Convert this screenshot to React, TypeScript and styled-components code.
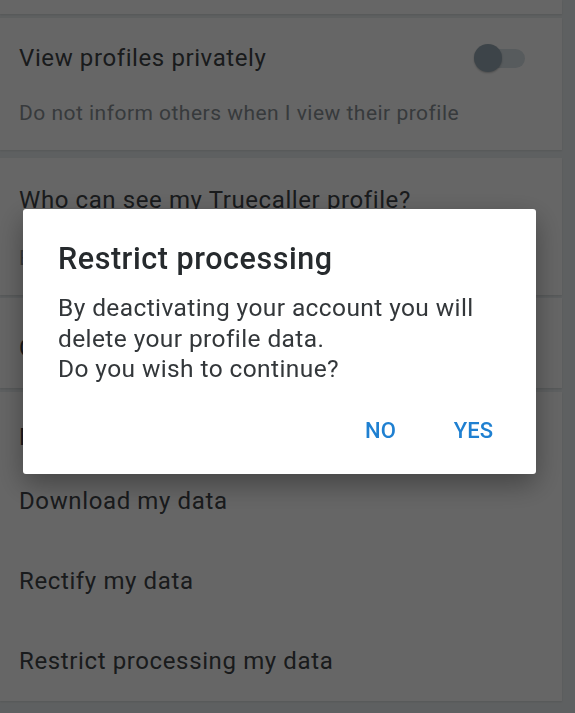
import React from 'react'
import styled, { createGlobalStyle } from 'styled-components'

const FONT = `Roboto, 'Noto Sans', 'Liberation Sans', sans-serif`

const GlobalStyle = createGlobalStyle`
  html, body {
    margin: 0;
    padding: 0;
    background: #ebf0f2;
  }
  body {
    font-family: ${FONT};
    -webkit-font-smoothing: antialiased;
  }
`

const Page = styled.div`
  width: 575px;
  height: 713px;
  overflow: hidden;
  padding-right: 13px;
  box-sizing: border-box;
`

const Card = styled.section<{ $height?: number; $gap?: number }>`
  background: #ffffff;
  box-shadow: 0 1px 2px rgba(0, 0, 0, 0.1);
  margin-bottom: ${(p) => p.$gap ?? 4}px;
  padding-left: 19px;
  box-sizing: border-box;
  ${(p) => (p.$height ? `height: ${p.$height}px;` : '')}
`

const Block = styled.div<{ $top: number; $bottom: number }>`
  padding-top: ${(p) => p.$top}px;
  padding-bottom: ${(p) => p.$bottom}px;
`

const TitleRow = styled.div`
  display: flex;
  align-items: center;
  justify-content: space-between;
  padding-right: 37px;
`

const Title = styled.div`
  font-size: 24px;
  letter-spacing: 0.6px;
  line-height: 28px;
  color: #3f4448;
  white-space: nowrap;
`

const Subtitle = styled.div<{ $gap: number }>`
  margin-top: ${(p) => p.$gap}px;
  font-size: 21px;
  letter-spacing: 0.48px;
  line-height: 26px;
  color: #8a9297;
  white-space: nowrap;
`

const ItemList = styled.div`
  margin-top: 10px;
`

const Item = styled.div`
  height: 80px;
  display: flex;
  align-items: center;
  font-size: 24px;
  letter-spacing: 0.62px;
  color: #3f4448;
  white-space: nowrap;
`

const Switch = styled.div`
  position: relative;
  width: 51px;
  height: 28px;
  flex-shrink: 0;
`

const Track = styled.div`
  position: absolute;
  left: 6px;
  right: 0;
  top: 4.5px;
  height: 19px;
  border-radius: 10px;
  background: #d9e3e8;
`

const Thumb = styled.div`
  position: absolute;
  left: 0;
  top: 0;
  width: 28px;
  height: 28px;
  border-radius: 50%;
  background: #98aab6;
  box-shadow: 0 1px 2px rgba(0, 0, 0, 0.25);
`

const Scrim = styled.div`
  position: fixed;
  inset: 0;
  background: rgba(0, 0, 0, 0.6);
  display: flex;
  align-items: flex-start;
  padding: 209px 0 0 23px;
  box-sizing: border-box;
`

const Dialog = styled.div`
  width: 513px;
  height: 265px;
  background: #ffffff;
  border-radius: 3px;
  box-shadow: 0 10px 28px rgba(0, 0, 0, 0.35);
  padding: 33px 43px 0 35px;
  box-sizing: border-box;
  display: flex;
  flex-direction: column;
`

const DialogTitle = styled.h2`
  margin: 0;
  font-size: 30.5px;
  letter-spacing: 0.55px;
  line-height: 34px;
  font-weight: 500;
  color: #262a2d;
  white-space: nowrap;
`

const DialogBody = styled.p`
  margin: 17px 0 0;
  font-size: 24.5px;
  letter-spacing: 0.4px;
  line-height: 30.5px;
  color: #33373a;
  white-space: nowrap;
`

const Actions = styled.div`
  margin-top: auto;
  margin-bottom: 31px;
  display: flex;
  justify-content: flex-end;
  gap: 58px;
`

const ActionButton = styled.button`
  border: none;
  background: none;
  padding: 0;
  font-family: ${FONT};
  font-size: 22px;
  line-height: 24px;
  font-weight: 500;
  color: #1f80d1;
  cursor: pointer;
`

const dataItems = ['Download my data', 'Rectify my data', 'Restrict processing my data']

export default function App() {
  return (
    <>
      <GlobalStyle />
      <Page>
        <Card $height={14} />
        <Card $gap={8}>
          <Block $top={26} $bottom={24}>
            <TitleRow>
              <Title>View profiles privately</Title>
              <Switch>
                <Track />
                <Thumb />
              </Switch>
            </TitleRow>
            <Subtitle $gap={28}>Do not inform others when I view their profile</Subtitle>
          </Block>
        </Card>
        <Card $gap={3}>
          <Block $top={28} $bottom={24}>
            <Title>Who can see my Truecaller profile?</Title>
            <Subtitle $gap={31}>Everyone</Subtitle>
          </Block>
        </Card>
        <Card>
          <Block $top={36} $bottom={26}>
            <Title>Customize ads</Title>
          </Block>
        </Card>
        <Card>
          <Block $top={31} $bottom={0}>
            <Title>Manage my data</Title>
            <ItemList>
              {dataItems.map((item) => (
                <Item key={item}>{item}</Item>
              ))}
            </ItemList>
          </Block>
        </Card>
      </Page>
      <Scrim>
        <Dialog role="dialog">
          <DialogTitle>Restrict processing</DialogTitle>
          <DialogBody>
            By deactivating your account you will
            <br />
            delete your profile data.
            <br />
            Do you wish to continue?
          </DialogBody>
          <Actions>
            <ActionButton>NO</ActionButton>
            <ActionButton>YES</ActionButton>
          </Actions>
        </Dialog>
      </Scrim>
    </>
  )
}
